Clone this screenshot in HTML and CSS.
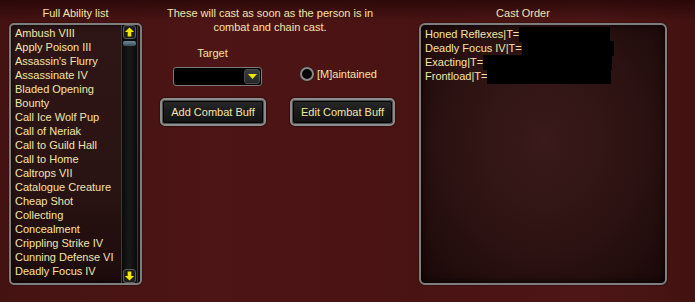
FILE: index.html
```html
<!DOCTYPE html>
<html>
<head>
<meta charset="utf-8">
<link rel="stylesheet" href="styles.css">
</head>
<body>
<div class="page">
  <div class="left">
    <div class="title">Full Ability list</div>
    <div class="listbox">
      <ul class="items">
        <li>Ambush VIII</li>
        <li>Apply Poison III</li>
        <li>Assassin's Flurry</li>
        <li>Assassinate IV</li>
        <li>Bladed Opening</li>
        <li>Bounty</li>
        <li>Call Ice Wolf Pup</li>
        <li>Call of Neriak</li>
        <li>Call to Guild Hall</li>
        <li>Call to Home</li>
        <li>Caltrops VII</li>
        <li>Catalogue Creature</li>
        <li>Cheap Shot</li>
        <li>Collecting</li>
        <li>Concealment</li>
        <li>Crippling Strike IV</li>
        <li>Cunning Defense VI</li>
        <li>Deadly Focus IV</li>
      </ul>
      <div class="scrollbar">
        <div class="sbtn">
          <svg width="12" height="12" viewBox="0 0 12 12"><polygon points="6,1 11,6 8,6 8,11 4,11 4,6 1,6" fill="#f2e600"/></svg>
        </div>
        <div class="thumb"></div>
        <div class="track"></div>
        <div class="sbtn">
          <svg width="12" height="12" viewBox="0 0 12 12"><polygon points="6,11 11,6 8,6 8,1 4,1 4,6 1,6" fill="#f2e600"/></svg>
        </div>
      </div>
    </div>
  </div>

  <div class="mid">
    <div class="intro">These will cast as soon as the person is in combat and chain cast.</div>
    <div class="controls">
      <div class="target-col">
        <div class="label">Target</div>
        <div class="dropdown">
          <div class="dd-btn">
            <svg width="9" height="6" viewBox="0 0 9 6"><polygon points="0,0 9,0 4.5,5" fill="#f2e600"/></svg>
          </div>
        </div>
      </div>
      <div class="radio-row">
        <span class="radio"></span>
        <span class="radio-label">[M]aintained</span>
      </div>
    </div>
    <div class="buttons">
      <div class="btn btn-add">Add Combat Buff</div>
      <div class="btn btn-edit">Edit Combat Buff</div>
    </div>
  </div>

  <div class="right">
    <div class="title title-right">Cast Order</div>
    <div class="castbox">
      <div class="row">Honed Reflexes|T=<span class="redact" style="width:91px"></span></div>
      <div class="row">Deadly Focus IV|T=<span class="redact" style="width:92px"></span></div>
      <div class="row">Exacting|T=<span class="redact" style="width:129px"></span></div>
      <div class="row">Frontload|T=<span class="redact" style="width:124px"></span></div>
    </div>
  </div>
</div>
</body>
</html>
```

FILE: styles.css
```css
* { box-sizing: border-box; }
html, body {
  margin: 0;
  padding: 0;
}
body {
  width: 695px;
  height: 302px;
  overflow: hidden;
  background:
    linear-gradient(180deg, rgba(20,0,0,0.55) 0px, rgba(20,0,0,0) 22px),
    linear-gradient(90deg, #451212 0%, #4d1515 30%, #4a1313 60%, #4e1616 85%, #431111 100%);
  font-family: "Liberation Sans", Arial, sans-serif;
  font-size: 11px;
  color: #f3e4a6;
}
.page {
  display: flex;
  padding-left: 9px;
  height: 302px;
}
.title {
  height: 14px;
  line-height: 14px;
  text-align: center;
  margin-top: 6px;
  margin-bottom: 3px;
}

/* left list */
.left { width: 133px; }
.listbox {
  height: 262px;
  display: flex;
  border: 2px solid #7e7e7e;
  border-radius: 5px;
  background: linear-gradient(180deg, #2f1616 0%, #2a1313 60%, #1d0b0b 100%);
  box-shadow: inset 0 0 6px rgba(0,0,0,0.8), 0 0 2px rgba(0,0,0,0.7);
  overflow: hidden;
}
.items {
  list-style: none;
  margin: 0;
  padding: 1px 0 0 4px;
  flex: 1;
  line-height: 14px;
  white-space: nowrap;
}
.scrollbar {
  width: 17px;
  margin-right: 2px;
  display: flex;
  flex-direction: column;
  background: #0b0b0b;
  border-left: 1px solid #3a3a3a;
  border-right: 1px solid #3a3a3a;
}
.sbtn {
  height: 14px;
  margin: 0 1px;
  border: 1px solid #5a5a5a;
  border-radius: 3px;
  background: #1c1e22;
  display: flex;
  align-items: center;
  justify-content: center;
}
.thumb {
  height: 5px;
  margin: 2px 1px 0;
  border-radius: 2px;
  background: linear-gradient(180deg, #6f8a9a, #3a4c58);
}
.track {
  flex: 1;
  background: linear-gradient(90deg, #0a0a0a, #1a1a1a 50%, #0a0a0a);
}

/* middle */
.mid {
  width: 277px;
  padding-top: 6px;
}
.intro {
  width: 220px;
  margin-left: 18px;
  text-align: center;
  line-height: 14px;
}
.controls {
  display: flex;
  margin-top: 12px;
}
.target-col {
  margin-left: 31px;
  width: 89px;
}
.label {
  line-height: 14px;
  text-align: center;
  padding-right: 10px;
}
.dropdown {
  margin-top: 7px;
  height: 19px;
  background: #000;
  border: 1px solid #7a7a7a;
  border-radius: 3px;
  display: flex;
  justify-content: flex-end;
  align-items: center;
  padding-right: 1px;
}
.dd-btn {
  width: 16px;
  height: 15px;
  border-radius: 3px;
  background: linear-gradient(180deg, #3a3d40, #25282a);
  border: 1px solid #4a4a4a;
  display: flex;
  align-items: center;
  justify-content: center;
}
.radio-row {
  display: flex;
  align-items: center;
  margin-left: 38px;
  margin-top: 21px;
  height: 14px;
}
.radio {
  width: 14px;
  height: 14px;
  border-radius: 50%;
  background: #050505;
  border: 2px solid #8a8a8a;
  box-shadow: 0 0 1px #000;
}
.radio-label {
  margin-left: 3px;
  line-height: 14px;
}
.buttons {
  display: flex;
  margin-top: 12px;
  margin-left: 18px;
  gap: 24px;
}
.btn {
  height: 28px;
  border-radius: 5px;
  border: 2px solid #8c8c8c;
  background: linear-gradient(180deg, #2a2a2a 0%, #1a1a1a 50%, #121212 100%);
  box-shadow: inset 0 0 0 1px #505050, inset 0 0 0 2px #000, 0 0 2px #000;
  display: flex;
  align-items: center;
  justify-content: center;
  line-height: 14px;
}
.btn-add { width: 106px; }
.btn-edit { width: 105px; }

/* right */
.right { width: 248px; }
.title-right { padding-right: 40px; }
.castbox {
  height: 262px;
  border: 2px solid #7e7e7e;
  border-radius: 6px;
  padding: 2px 0 0 4px;
  background:
    radial-gradient(ellipse at 50% 45%, #3a1a1a 0%, #2d1212 55%, #1a0808 100%);
  box-shadow: inset 0 0 8px rgba(0,0,0,0.8), 0 0 2px rgba(0,0,0,0.7);
}
.row {
  line-height: 14px;
  height: 14px;
  white-space: nowrap;
  display: flex;
}
.redact {
  display: inline-block;
  height: 15px;
  background: #000;
}
```
